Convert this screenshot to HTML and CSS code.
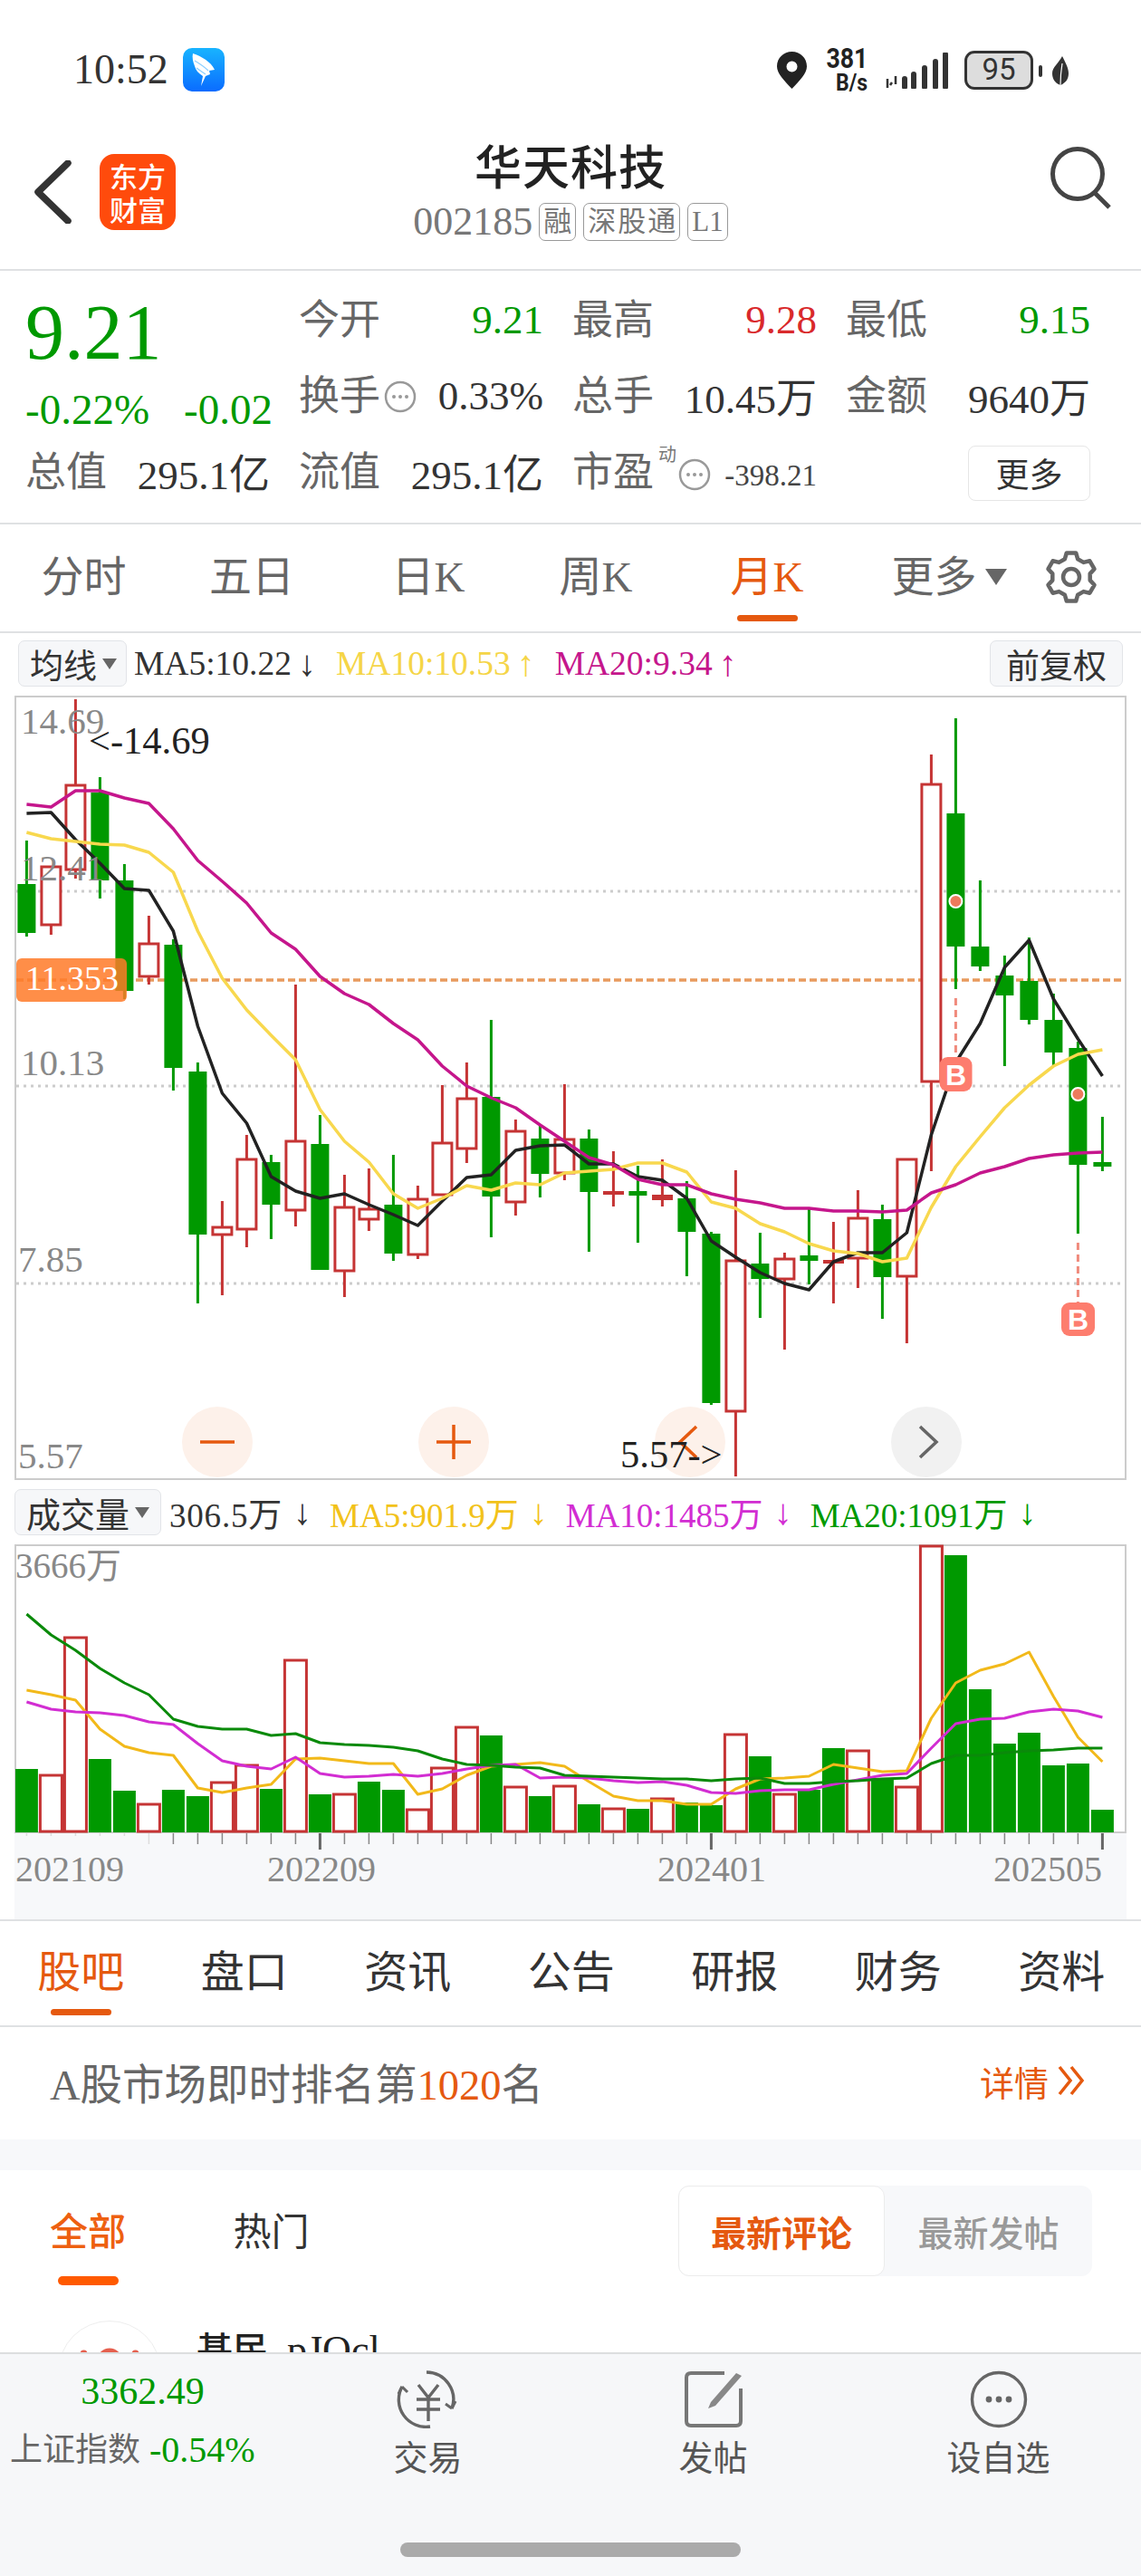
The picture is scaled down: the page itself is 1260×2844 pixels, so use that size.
FILE: index.html
```html
<!DOCTYPE html>
<html lang="zh">
<head>
<meta charset="utf-8">
<title>华天科技</title>
<link rel="stylesheet" href="styles.css">
</head>
<body>
<div class="page">
  <header class="status">
    <span class="clock">10:52</span>
    <svg class="app-icon" viewBox="0 0 46 48"><defs><linearGradient id="blue" x1="0" y1="0" x2="0" y2="1"><stop offset="0" stop-color="#18b4ff"/><stop offset="1" stop-color="#0a6cff"/></linearGradient></defs><rect width="46" height="48" rx="10" fill="url(#blue)"/><path d="M11 6C20 9 31 15 35 24L29 25L30 29L25 31L20 42L22 31C17 28 14 24 13 20C11 15 10 10 11 6Z" fill="#fff"/><path d="M13 14C18 17 23 20 28 25M15 22C19 25 22 27 25 29" stroke="#8ccfff" stroke-width="1.3" fill="none"/></svg>
    <div class="sys">
      <svg class="pin" viewBox="0 0 33 41"><path fill-rule="evenodd" d="M16.5 0C7.4 0 0 7.2 0 16.2C0 24 8 32 16.5 41C25 32 33 24 33 16.2C33 7.2 25.6 0 16.5 0ZM16.5 10.5a6 6 0 1 1 0 12a6 6 0 0 1 0-12Z" fill="#222"/></svg>
      <div class="speed"><b>381</b><b class="speed-unit">B/s</b></div>
      <svg class="signal" viewBox="0 0 72 40"><path d="M3 29v10M8 33l-2 3M12 26v9" stroke="#333" stroke-width="2.5" fill="none"/><path d="M22 29v9M32 24v14M44 17v21M56 10v28M67 2v36" stroke="#333" stroke-width="6" stroke-linecap="round" fill="none"/></svg>
      <div class="battery"><span>95</span><i class="battery-nub"></i></div>
      <svg class="leaf" viewBox="0 0 18 32"><path d="M11 0C15 8 18 13 18 19C18 26 14 30 9 32C3 30 0 25 0 19C0 12 7 8 11 0Z" fill="#333"/><path d="M9 32C9 24 10 14 11 8" stroke="#fff" stroke-width="1.2" fill="none"/></svg>
    </div>
  </header>

  <nav class="navbar">
    <div class="nav-left">
      <svg class="back" viewBox="0 0 42 70"><path d="M38 3L5 35L38 67" fill="none" stroke="#333" stroke-width="7.5" stroke-linecap="round" stroke-linejoin="round"/></svg>
      <div class="logo"><span>东方</span><span>财富</span></div>
    </div>
    <div class="nav-title">
      <h1>华天科技</h1>
      <div class="code-row"><span class="code">002185</span><span class="tag">融</span><span class="tag tag-wide">深股通</span><span class="tag">L1</span></div>
    </div>
    <div class="nav-right">
      <svg class="search" viewBox="0 0 70 70"><circle cx="30" cy="30" r="27.5" fill="none" stroke="#444" stroke-width="5"/><path d="M48 50L65 67" stroke="#444" stroke-width="5" fill="none"/></svg>
    </div>
  </nav>

  <section class="quote">
    <div class="price-block">
      <div class="price">9.21</div>
      <div class="change"><span>-0.22%</span><span>-0.02</span></div>
    </div>
    <div class="cell"><span class="lbl">今开</span><span class="val green">9.21</span></div>
    <div class="cell"><span class="lbl">最高</span><span class="val red">9.28</span></div>
    <div class="cell"><span class="lbl">最低</span><span class="val green">9.15</span></div>
    <div class="cell"><span class="lbl">换手</span><svg class="more-dot" viewBox="0 0 36 36"><circle cx="18" cy="18" r="16" fill="none" stroke="#999" stroke-width="2.5"/><circle cx="11" cy="18" r="2" fill="#999"/><circle cx="18" cy="18" r="2" fill="#999"/><circle cx="25" cy="18" r="2" fill="#999"/></svg><span class="val">0.33%</span></div>
    <div class="cell"><span class="lbl">总手</span><span class="val">10.45万</span></div>
    <div class="cell"><span class="lbl">金额</span><span class="val">9640万</span></div>
    <div class="cell"><span class="lbl">总值</span><span class="val">295.1亿</span></div>
    <div class="cell"><span class="lbl">流值</span><span class="val">295.1亿</span></div>
    <div class="cell"><span class="lbl">市盈</span><sup class="dyn">动</sup><svg class="more-dot" viewBox="0 0 36 36"><circle cx="18" cy="18" r="16" fill="none" stroke="#999" stroke-width="2.5"/><circle cx="11" cy="18" r="2" fill="#999"/><circle cx="18" cy="18" r="2" fill="#999"/><circle cx="25" cy="18" r="2" fill="#999"/></svg><span class="val small">-398.21</span></div>
    <div class="cell cell-end"><button class="more-btn">更多</button></div>
  </section>

  <nav class="period">
    <div class="tab"><span class="tab-label">分时</span></div>
    <div class="tab"><span class="tab-label">五日</span></div>
    <div class="tab"><span class="tab-label">日K</span></div>
    <div class="tab"><span class="tab-label">周K</span></div>
    <div class="tab on"><span class="tab-label">月K</span><i class="tab-bar"></i></div>
    <div class="tab"><span class="tab-label">更多<em class="tri"></em></span></div>
    <svg class="gear" viewBox="-30 -30 60 60"><path d="M-7.2-19.7L-5.2-26.5L5.2-26.5L7.2-19.7L13.5-16.1L20.4-17.7L25.5-8.8L20.7-3.6L20.7 3.6L25.5 8.8L20.4 17.7L13.5 16.1L7.2 19.7L5.2 26.5L-5.2 26.5L-7.2 19.7L-13.5 16.1L-20.4 17.7L-25.5 8.8L-20.7 3.6L-20.7-3.6L-25.5-8.8L-20.4-17.7L-13.5-16.1Z" fill="none" stroke="#666" stroke-width="4.5" stroke-linejoin="round"/><circle r="9" fill="none" stroke="#666" stroke-width="4.5"/></svg>
  </nav>

  <div class="ma-row">
    <div class="chip">均线<em class="tri small-tri"></em></div>
    <span class="ma c-dark">MA5:10.22</span><span class="arrow c-dark">↓</span>
    <span class="ma c-yellow">MA10:10.53</span><span class="arrow c-yellow">↑</span>
    <span class="ma c-magenta">MA20:9.34</span><span class="arrow c-magenta">↑</span>
    <div class="chip chip-end">前复权</div>
  </div>

  <svg class="chart-main" viewBox="0 764 1260 876">
    <rect class="frame" x="17" y="769" width="1226" height="864"/>
    <path class="dots" d="M18 984H1242M18 1199H1242M18 1417H1242"/>
    <path class="dash" d="M18 1082H1242"/>
    <path class="wick wick-g" d="M29.4 928V1034M110.4 858V992M137.4 954V1103M191.4 1037V1204M218.4 1173V1439M299.4 1275V1368M353.4 1231V1402M434.4 1275V1392M542.4 1126V1366M596.4 1242V1322M650.4 1247V1382M704.4 1287V1372M758.4 1304V1409M785.4 1360V1551M839.4 1361V1455M893.4 1335V1418M974.4 1330V1456M1055.4 793V1092M1082.4 972V1072M1109.4 1055V1177M1136.4 1035V1131M1163.4 1097V1178M1190.4 1150V1362M1217.4 1233V1293"/>
    <path class="wick wick-r" d="M56.4 1021V1032M83.4 772V867M83.4 960V970M164.4 1011V1042M164.4 1078V1087M245.4 1326V1355M245.4 1363V1430M272.4 1253V1280M272.4 1357V1377M326.4 1087V1260M326.4 1336V1354M380.4 1297V1333M380.4 1403V1432M407.4 1290V1335M407.4 1346V1359M461.4 1309V1324M461.4 1385V1390M488.4 1198V1262M515.4 1173V1213M515.4 1268V1284M569.4 1236V1249M569.4 1327V1342M623.4 1197V1258M623.4 1295V1303M677.4 1271V1332M731.4 1280V1332M812.4 1292V1392M812.4 1558V1630M866.4 1383V1390M866.4 1412V1490M920.4 1349V1439M947.4 1314V1345M947.4 1389V1422M1001.4 1409V1483M1028.4 833V866M1028.4 1194V1293"/>
    <path class="body-g" d="M19.4 976h20v54h-20zM100.4 875h20v97h-20zM127.4 972h20v122h-20zM181.4 1043h20v136h-20zM208.4 1183h20v180h-20zM289.4 1283h20v47h-20zM343.4 1263h20v139h-20zM424.4 1330h20v54h-20zM532.4 1211h20v110h-20zM586.4 1257h20v39h-20zM640.4 1257h20v59h-20zM748.4 1323h20v37h-20zM775.4 1362h20v187h-20zM829.4 1395h20v17h-20zM964.4 1346h20v64h-20zM1045.4 898h20v147h-20zM1072.4 1045h20v22h-20zM1099.4 1077h20v22h-20zM1126.4 1083h20v43h-20zM1153.4 1126h20v36h-20zM1180.4 1157h20v129h-20zM694.4 1315h20v5h-20zM883.4 1386h20v6h-20zM1207.4 1283h20v5h-20z"/>
    <path class="body-r" d="M45.9 957h21v64h-21zM72.9 867h21v93h-21zM153.9 1042h21v36h-21zM234.9 1355h21v8h-21zM261.9 1280h21v77h-21zM315.9 1260h21v76h-21zM369.9 1333h21v70h-21zM396.9 1335h21v11h-21zM450.9 1324h21v61h-21zM477.9 1262h21v57h-21zM504.9 1213h21v55h-21zM558.9 1249h21v78h-21zM612.9 1258h21v37h-21zM801.9 1392h21v166h-21zM855.9 1390h21v22h-21zM936.9 1345h21v44h-21zM990.9 1280h21v129h-21zM1017.9 866h21v328h-21z"/>
    <path class="doji-r" d="M666 1315h23v4h-23zM720 1319h23v6h-23zM909 1391h23v4h-23z"/>
    <polyline class="ma-line l-black" points="29.4,898 56.4,897 83.4,927 110.4,953 137.4,981 164.4,983 191.4,1028 218.4,1133 245.4,1207 272.4,1240 299.4,1299 326.4,1315 353.4,1323 380.4,1318 407.4,1330 434.4,1341 461.4,1353 488.4,1326 515.4,1300 542.4,1297 569.4,1270 596.4,1265 623.4,1264 650.4,1285 677.4,1285 704.4,1299 731.4,1303 758.4,1323 785.4,1370 812.4,1388 839.4,1405 866.4,1417 893.4,1424 920.4,1393 947.4,1383 974.4,1383 1001.4,1361 1028.4,1253 1055.4,1173 1082.4,1130 1109.4,1068 1136.4,1038 1163.4,1103 1190.4,1147 1217.4,1188"/>
    <polyline class="ma-line l-yellow" points="29.4,919 56.4,926 83.4,929 110.4,932 137.4,933 164.4,941 191.4,963 218.4,1028 245.4,1080 272.4,1115 299.4,1143 326.4,1170 353.4,1225 380.4,1260 407.4,1283 434.4,1318 461.4,1334 488.4,1323 515.4,1309 542.4,1314 569.4,1306 596.4,1308 623.4,1295 650.4,1293 677.4,1291 704.4,1284 731.4,1284 758.4,1294 785.4,1327 812.4,1334 839.4,1351 866.4,1360 893.4,1373 920.4,1381 947.4,1384 974.4,1393 1001.4,1389 1028.4,1333 1055.4,1288 1082.4,1255 1109.4,1223 1136.4,1198 1163.4,1177 1190.4,1164 1217.4,1159"/>
    <polyline class="ma-line l-magenta" points="29.4,888 56.4,891 83.4,873 110.4,873 137.4,881 164.4,887 191.4,915 218.4,950 245.4,973 272.4,997 299.4,1030 326.4,1048 353.4,1078 380.4,1097 407.4,1109 434.4,1130 461.4,1148 488.4,1177 515.4,1199 542.4,1212 569.4,1223 596.4,1242 623.4,1260 650.4,1278 677.4,1286 704.4,1302 731.4,1308 758.4,1308 785.4,1318 812.4,1324 839.4,1328 866.4,1334 893.4,1334 920.4,1337 947.4,1337 974.4,1338 1001.4,1336 1028.4,1317 1055.4,1308 1082.4,1295 1109.4,1288 1136.4,1279 1163.4,1275 1190.4,1273 1217.4,1272"/>
    <text class="axis" x="23" y="810">14.69</text>
    <text class="axis" x="23" y="972">12.41</text>
    <text class="axis" x="23" y="1187">10.13</text>
    <text class="axis" x="20" y="1404">7.85</text>
    <text class="axis" x="20" y="1621">5.57</text>
    <rect class="price-flag" x="18" y="1058" width="122" height="48" rx="6"/>
    <text class="flag-text" x="28" y="1093">11.353</text>
    <text class="peak" x="98" y="832">&lt;-14.69</text>
    <path class="mark-dash" d="M1055.4 1102V1167M1190.4 1372V1438"/>
    <circle class="mark-dot" cx="1055.4" cy="995" r="7"/>
    <circle class="mark-dot" cx="1190.4" cy="1208" r="7"/>
    <rect class="mark" x="1037.5" y="1167" width="36" height="38" rx="9"/>
    <text class="mark-b" x="1055.5" y="1198">B</text>
    <rect class="mark" x="1172" y="1438" width="37" height="37" rx="9"/>
    <text class="mark-b" x="1190.5" y="1468">B</text>
    <circle class="btn-o" cx="240" cy="1592" r="39"/>
    <path class="btn-s" d="M221 1592H259"/>
    <circle class="btn-o" cx="501" cy="1592" r="39"/>
    <path class="btn-s" d="M482 1592H520M501 1573V1611"/>
    <circle class="btn-o" cx="762" cy="1592" r="39"/>
    <path class="btn-s" d="M769 1575L751 1592L769 1609"/>
    <circle class="btn-n" cx="1023" cy="1592" r="39"/>
    <path class="btn-g" d="M1016 1575L1034 1592L1016 1609"/>
    <text class="peak" x="685" y="1620">5.57-&gt;</text>
  </svg>

  <div class="vol-row">
    <div class="chip chip-vol">成交量<em class="tri small-tri"></em></div>
    <span class="vm vm-first c-dark">306.5万</span><span class="varrow c-dark">↓</span>
    <span class="vm c-gold">MA5:901.9万</span><span class="varrow c-gold">↓</span>
    <span class="vm c-purple">MA10:1485万</span><span class="varrow c-purple">↓</span>
    <span class="vm c-green">MA20:1091万</span><span class="varrow c-green">↓</span>
  </div>

  <svg class="chart-vol" viewBox="0 1700 1260 419">
    <rect class="axis-bg" x="16" y="2023" width="1228" height="96"/>
    <rect class="frame" x="17" y="1706" width="1226" height="317"/>
    <path class="tick tick-faint" d="M29.4 2024v3M56.4 2024v3M83.4 2024v3M110.4 2024v3M137.4 2024v3M164.4 2024v12"/>
    <path class="tick" d="M191.4 2024v12M218.4 2024v12M245.4 2024v12M272.4 2024v12M299.4 2024v12M326.4 2024v12M380.4 2024v12M407.4 2024v12M434.4 2024v12M461.4 2024v12M488.4 2024v12M515.4 2024v12M542.4 2024v12M569.4 2024v12M596.4 2024v12M623.4 2024v12M650.4 2024v12M677.4 2024v12M704.4 2024v12M731.4 2024v12M758.4 2024v12M812.4 2024v12M839.4 2024v12M866.4 2024v12M893.4 2024v12M920.4 2024v12M947.4 2024v12M974.4 2024v12M1001.4 2024v12M1028.4 2024v12M1055.4 2024v12M1082.4 2024v12M1109.4 2024v12M1136.4 2024v12M1163.4 2024v12M1190.4 2024v12"/>
    <path class="tick tick-major" d="M353.4 2024v18M785.4 2024v18M1217.4 2024v18"/>
    <path class="body-g" d="M17 1953h24.9V2023h-24.9zM97.9 1942h25V2023h-25zM124.9 1977h25V2023h-25zM178.9 1976h25V2023h-25zM205.9 1983h25V2023h-25zM286.9 1975h25V2023h-25zM340.9 1981h25V2023h-25zM394.9 1967h25V2023h-25zM421.9 1976h25V2023h-25zM529.9 1916h25V2023h-25zM583.9 1983h25V2023h-25zM637.9 1992h25V2023h-25zM691.9 1997h25V2023h-25zM745.9 1990h25V2023h-25zM772.9 1993h25V2023h-25zM826.9 1939h25V2023h-25zM880.9 1976h25V2023h-25zM907.9 1930h25V2023h-25zM961.9 1963h25V2023h-25zM1042.9 1717h25V2023h-25zM1069.9 1865h25V2023h-25zM1096.9 1925h25V2023h-25zM1123.9 1913h25V2023h-25zM1150.9 1949h25V2023h-25zM1177.9 1947h25V2023h-25zM1204.9 1998h25V2023h-25z"/>
    <path class="bar-r" d="M44.4 1960h24V2022h-24zM71.4 1808h24V2022h-24zM152.4 1992h24V2022h-24zM233.4 1968h24V2022h-24zM260.4 1949h24V2022h-24zM314.4 1833h24V2022h-24zM368.4 1981h24V2022h-24zM449.4 1998h24V2022h-24zM476.4 1952h24V2022h-24zM503.4 1907h24V2022h-24zM557.4 1973h24V2022h-24zM611.4 1972h24V2022h-24zM665.4 1997h24V2022h-24zM719.4 1986h24V2022h-24zM800.4 1915h24V2022h-24zM854.4 1981h24V2022h-24zM935.4 1933h24V2022h-24zM989.4 1973h24V2022h-24zM1016.4 1707h24V2022h-24z"/>
    <polyline class="vol-line l-gold" points="29.4,1866 56.4,1871 83.4,1877 110.4,1909 137.4,1928 164.4,1935 191.4,1938 218.4,1974 245.4,1979 272.4,1974 299.4,1970 326.4,1942 353.4,1941 380.4,1944 407.4,1947 434.4,1947 461.4,1981 488.4,1975 515.4,1960 542.4,1950 569.4,1948 596.4,1946 623.4,1950 650.4,1967 677.4,1983 704.4,1988 731.4,1988 758.4,1992 785.4,1992 812.4,1975 839.4,1964 866.4,1963 893.4,1961 920.4,1948 947.4,1952 974.4,1956 1001.4,1955 1028.4,1897 1055.4,1858 1082.4,1844 1109.4,1837 1136.4,1824 1163.4,1873 1190.4,1918 1217.4,1945"/>
    <polyline class="vol-line l-purple" points="29.4,1879 56.4,1887 83.4,1890 110.4,1891 137.4,1894 164.4,1901 191.4,1904 218.4,1925 245.4,1944 272.4,1950 299.4,1953 326.4,1940 353.4,1958 380.4,1962 407.4,1961 434.4,1959 461.4,1961 488.4,1958 515.4,1953 542.4,1949 569.4,1948 596.4,1963 623.4,1962 650.4,1963 677.4,1966 704.4,1968 731.4,1967 758.4,1971 785.4,1979 812.4,1980 839.4,1977 866.4,1976 893.4,1976 920.4,1970 947.4,1965 974.4,1960 1001.4,1958 1028.4,1930 1055.4,1903 1082.4,1898 1109.4,1897 1136.4,1890 1163.4,1887 1190.4,1889 1217.4,1896"/>
    <polyline class="vol-line l-dgreen" points="29.4,1782 56.4,1805 83.4,1822 110.4,1842 137.4,1858 164.4,1871 191.4,1898 218.4,1906 245.4,1909 272.4,1909 299.4,1916 326.4,1914 353.4,1924 380.4,1926 407.4,1927 434.4,1929 461.4,1933 488.4,1942 515.4,1948 542.4,1949 569.4,1951 596.4,1952 623.4,1960 650.4,1961 677.4,1962 704.4,1963 731.4,1964 758.4,1964 785.4,1966 812.4,1964 839.4,1963 866.4,1969 893.4,1969 920.4,1967 947.4,1966 974.4,1964 1001.4,1963 1028.4,1947 1055.4,1938 1082.4,1938 1109.4,1935 1136.4,1933 1163.4,1932 1190.4,1930 1217.4,1930"/>
    <text class="axis axis-v" x="17" y="1742">3666万</text>
    <text class="axis axis-date" x="17" y="2077">202109</text>
    <text class="axis axis-date" x="295" y="2077">202209</text>
    <text class="axis axis-date" x="726" y="2077">202401</text>
    <text class="axis axis-date" x="1097" y="2077">202505</text>
  </svg>

  <nav class="sections">
    <div class="sec on"><span class="sec-label">股吧</span><i class="sec-bar"></i></div>
    <div class="sec"><span class="sec-label">盘口</span></div>
    <div class="sec"><span class="sec-label">资讯</span></div>
    <div class="sec"><span class="sec-label">公告</span></div>
    <div class="sec"><span class="sec-label">研报</span></div>
    <div class="sec"><span class="sec-label">财务</span></div>
    <div class="sec"><span class="sec-label">资料</span></div>
  </nav>

  <div class="rank">
    <span class="rank-text">A股市场即时排名第<b>1020</b>名</span>
    <span class="rank-link">详情<svg class="dchev" viewBox="0 0 32 34"><path d="M3 2L15 17L3 32M16 2L28 17L16 32" fill="none" stroke="#e5590f" stroke-width="3.5"/></svg></span>
  </div>

  <div class="band"></div>

  <section class="feed">
    <div class="feed-head">
      <div class="feed-tab on"><span>全部</span><i></i></div>
      <div class="feed-tab"><span>热门</span></div>
      <div class="seg">
        <span class="seg-item on">最新评论</span>
        <span class="seg-item">最新发帖</span>
      </div>
    </div>
    <div class="post">
      <div class="avatar"><svg class="avatar-art" viewBox="0 0 114 114"><circle cx="57" cy="44" r="14" fill="#e5604f"/><circle cx="28" cy="36" r="4" fill="#e5604f"/><circle cx="86" cy="36" r="4" fill="#e5604f"/></svg></div>
      <span class="post-name">基民<em>pJQcl</em></span>
    </div>
  </section>

  <footer class="bottom">
    <div class="bottom-grid">
      <div class="index">
        <span class="index-val">3362.49</span>
        <span class="index-row">上证指数<b>-0.54%</b></span>
      </div>
      <div class="act">
        <svg class="act-icon" viewBox="0 0 72 64"><path d="M34 2A30 30 0 0 1 62 42M38 62A30 30 0 0 1 7 18" fill="none" stroke="#666" stroke-width="3.4"/><path d="M62 42L66 34M62 42L55 37M7 18L3 26M7 18L13 24" fill="none" stroke="#666" stroke-width="3"/><path d="M25 16L36 30L47 16M23 32H49M23 43H49M36 30V56" fill="none" stroke="#666" stroke-width="3.4"/></svg>
        <span>交易</span>
      </div>
      <div class="act">
        <svg class="act-icon" viewBox="0 0 72 64"><path d="M48 3H11Q6 3 6 8V56Q6 61 11 61H61Q66 61 66 56V20" fill="none" stroke="#777" stroke-width="4"/><path d="M61 3L67 6L38 39L30 42L33 35Z" fill="#888"/></svg>
        <span>发帖</span>
      </div>
      <div class="act">
        <svg class="act-icon" viewBox="0 0 72 64"><circle cx="36" cy="32" r="29.5" fill="none" stroke="#666" stroke-width="3.4"/><circle cx="25" cy="32" r="3.4" fill="#666"/><circle cx="36" cy="32" r="3.4" fill="#666"/><circle cx="47" cy="32" r="3.4" fill="#666"/></svg>
        <span>设自选</span>
      </div>
    </div>
    <div class="home-bar"></div>
  </footer>
</div>
</body>
</html>
```
FILE: styles.css
```css
* { box-sizing: border-box; }
html, body { margin: 0; padding: 0; background: #fff; }
body { font-family: "Liberation Serif", "Noto Sans CJK SC", serif; color: #333; }
em, i { font-style: normal; }
.page { position: relative; width: 1260px; height: 2844px; overflow: hidden; background: #fff; }

/* status bar */
.status { display: flex; height: 150px; padding: 53px 80px 0 81px; align-items: flex-start; }
.clock { font-size: 46px; line-height: 48px; color: #333; }
.app-icon { width: 46px; height: 48px; margin-left: 16px; }
.sys { display: flex; margin-left: auto; align-items: flex-start; }
.pin { width: 33px; height: 41px; margin-top: 4px; }
.speed { display: flex; flex-direction: column; align-items: flex-end; width: 46px; margin-left: 21px; font-family: Roboto, sans-serif; color: #222; }
.speed b { font-size: 31px; line-height: 23px; transform: scaleX(.86); transform-origin: right center; }
.speed .speed-unit { font-size: 25px; line-height: 20px; margin-top: 6px; transform: scaleX(.92); }
.signal { width: 72px; height: 40px; margin: 5px 0 0 19px; }
.battery { position: relative; width: 76px; height: 43px; margin: 3px 0 0 16px; border: 3.5px solid #333; border-radius: 11px; background: #ddd; text-align: center; font-family: Roboto, sans-serif; font-size: 33px; line-height: 36px; color: #333; }
.battery-nub { position: absolute; right: -13px; top: 13px; width: 4px; height: 13px; border-radius: 2px; background: #333; }
.leaf { width: 18px; height: 32px; margin: 9px 0 0 21px; }

/* nav bar */
.navbar { display: grid; grid-template-columns: 1fr auto 1fr; height: 149px; border-bottom: 2px solid #dfe1e3; }
.nav-left { display: flex; align-items: center; height: 84px; margin-top: 20px; padding-left: 37px; }
.back { width: 42px; height: 70px; }
.logo { display: flex; flex-direction: column; align-items: center; justify-content: center; width: 84px; height: 84px; margin-left: 31px; border-radius: 16px; background: #ff4b0c; color: #fff; font-family: "Noto Sans CJK SC", sans-serif; font-size: 31px; line-height: 37px; font-weight: 500; }
.nav-title { display: flex; flex-direction: column; align-items: center; padding-top: 9px; }
.nav-title h1 { margin: 0; font-size: 52px; line-height: 56px; font-weight: 500; color: #222; letter-spacing: 1px; }
.code-row { display: flex; align-items: center; margin-top: 9px; gap: 8px; }
.code { font-size: 44px; line-height: 42px; color: #777; margin-right: -1px; }
.tag { height: 42px; padding: 0 4px; border: 1.5px solid #999; border-radius: 7px; font-size: 31px; line-height: 39px; color: #777; }
.tag-wide { letter-spacing: 2px; padding-right: 2px; }
.nav-right { display: flex; justify-content: flex-end; padding: 12px 30px 0 0; }
.search { width: 70px; height: 70px; }

/* quote */
.quote { display: grid; grid-template-columns: repeat(4, 270px); grid-auto-rows: 84px; column-gap: 32px; height: 280px; padding: 13px 0 0 28px; border-bottom: 2px solid #dfe1e3; }
.price-block { grid-row: span 2; display: flex; flex-direction: column; }
.price { margin-top: 10px; font-size: 86px; line-height: 90px; color: #090; }
.change { display: flex; justify-content: space-between; margin-top: 15px; width: 273px; font-size: 47px; line-height: 50px; color: #090; }
.cell { display: flex; align-items: center; }
.cell-end { justify-content: flex-end; }
.lbl { font-size: 45px; color: #666; line-height: 84px; }
.val { margin-left: auto; margin-bottom: 3px; font-size: 45px; color: #333; white-space: nowrap; }
.val.small { font-size: 33px; margin-top: 6px; margin-bottom: 0; color: #444; }
.green { color: #090; }
.red { color: #d9292b; }
.more-dot { width: 36px; height: 36px; margin-left: 4px; }
.dyn { font-size: 20px; color: #777; line-height: 20px; align-self: flex-start; margin: 12px 0 0 5px; }
.cell .dyn + .more-dot { margin-left: 2px; margin-top: 4px; }
.more-btn { width: 135px; height: 61px; border: 1.5px solid #e6e6e6; border-radius: 8px; background: #fff; font: inherit; font-size: 37px; color: #333; padding: 0; }

/* period tabs */
.period { display: grid; grid-template-columns: 185px 186px 204px 166px 212px 190px 1fr; height: 120px; border-bottom: 2px solid #dfe1e3; align-items: start; }
.tab { display: flex; flex-direction: column; align-items: center; padding-top: 34px; }
.tab-label { display: flex; align-items: center; font-size: 47px; line-height: 48px; color: #666; }
.tab.on .tab-label { color: #e5590f; }
.tab-bar { width: 67px; height: 7px; margin-top: 18px; border-radius: 4px; background: #e5590f; }
.tri { display: inline-block; width: 0; height: 0; margin-left: 9px; border-left: 12px solid transparent; border-right: 12px solid transparent; border-top: 18px solid #666; }
.small-tri { margin-left: 6px; border-left-width: 8px; border-right-width: 8px; border-top-width: 12px; }
.gear { width: 60px; height: 60px; margin: 28px 0 0 10px; }

/* MA row */
.ma-row { display: flex; align-items: center; height: 65px; padding: 8px 20px 6px 20px; }
.chip { display: flex; align-items: center; height: 51px; padding: 0 10px 0 12px; border: 1.5px solid #e2e4e8; border-radius: 7px; background: #f6f7f9; font-size: 37px; color: #333; white-space: nowrap; }
.chip-end { margin-left: auto; padding: 0; width: 147px; justify-content: center; }
.ma { font-size: 37.5px; margin-left: 8px; white-space: nowrap; }
.arrow { font-size: 40px; margin-left: 7px; margin-right: 14px; }
.c-dark { color: #333; }
.c-yellow { color: #f5d547; }
.c-magenta { color: #c5168c; }
.c-gold { color: #f2c21a; }
.c-purple { color: #d22dd2; }
.c-green { color: #090; }

/* chart svg */
.chart-main { display: block; width: 1260px; height: 876px; }
.chart-vol { display: block; width: 1260px; height: 419px; }
.frame { fill: #fff; stroke: #ccc; stroke-width: 2; }
.dots { stroke: #ccc; stroke-width: 3; stroke-dasharray: 3 5; fill: none; }
.dash { stroke: #e89a5e; stroke-width: 3.5; stroke-dasharray: 8 4; fill: none; }
.wick { fill: none; stroke-width: 3; }
.wick-g { stroke: #090; }
.wick-r { stroke: #c53434; }
.body-g { fill: #090; }
.body-r { fill: #fff; stroke: #c53434; stroke-width: 3; }
.doji-r { fill: #c53434; }
.ma-line { fill: none; stroke-width: 3.5; stroke-linejoin: round; }
.l-black { stroke: #222; }
.l-yellow { stroke: #f8d84e; }
.l-magenta { stroke: #c5168c; }
.axis { font-size: 41px; fill: #888; }
.axis-v { font-size: 39px; }
.axis-date { font-size: 40px; }
.peak { font-size: 42.5px; fill: #222; }
.price-flag { fill: #ff7a28; fill-opacity: .85; }
.flag-text { font-size: 38px; fill: #fff; }
.mark-dash { fill: none; stroke: #f08a7c; stroke-width: 3; stroke-dasharray: 8 5; }
.mark-dot { fill: #ed7a5c; stroke: #fff; stroke-width: 2; }
.mark { fill: #fd7d6e; }
.mark-b { font-family: "Liberation Sans", sans-serif; font-weight: 700; font-size: 32px; fill: #fff; text-anchor: middle; }
.btn-o { fill: #fdf1ea; }
.btn-n { fill: #f1f1f1; }
.btn-s { fill: none; stroke: #e5590f; stroke-width: 3.5; }
.btn-g { fill: none; stroke: #666; stroke-width: 3.5; }

/* volume */
.vol-row { display: flex; align-items: center; height: 60px; padding: 4px 0 5px 16px; }
.chip-vol { width: 162px; font-size: 38px; padding: 0 9px 0 12px; }
.vm { font-size: 37px; margin-left: 9px; white-space: nowrap; }
.vm-first { letter-spacing: .8px; }
.varrow { font-size: 40px; margin-left: 12px; margin-right: 11px; }
.axis-bg { fill: #f7f8fa; }
.bar-r { fill: #fff; stroke: #c53434; stroke-width: 3; }
.tick { fill: none; stroke: #888; stroke-width: 1.5; }
.tick-faint { stroke: #ddd; }
.tick-major { stroke: #666; stroke-width: 3; }
.vol-line { fill: none; stroke-width: 3; stroke-linejoin: round; }
.l-gold { stroke: #f2b91a; }
.l-purple { stroke: #d22dd2; }
.l-dgreen { stroke: #0a8a0a; }

/* section tabs */
.sections { display: grid; grid-template-columns: repeat(7, 180.5px); height: 119px; margin-left: -1px; border-top: 2px solid #dfe1e3; border-bottom: 2px solid #dfe1e3; width: 1262px; }
.sec { display: flex; flex-direction: column; align-items: center; padding-top: 33px; }
.sec-label { font-size: 48px; line-height: 48px; color: #333; }
.sec.on .sec-label { color: #e5590f; }
.sec-bar { width: 67px; height: 7px; margin-top: 16px; border-radius: 4px; background: #e5590f; }

/* rank */
.rank { display: flex; justify-content: space-between; align-items: center; height: 124px; padding: 0 61px 6px 55px; }
.rank-text { font-size: 46.5px; color: #666; white-space: nowrap; }
.rank-text b { font-weight: 400; color: #e5590f; }
.rank-link { display: flex; align-items: center; font-size: 38px; color: #e5590f; }
.dchev { width: 32px; height: 34px; margin-left: 9px; }
.band { height: 34px; background: #f7f8fa; }

/* feed */
.feed-head { display: flex; height: 125px; padding: 17px 54px 0 0; align-items: flex-start; }
.feed-tab { display: flex; flex-direction: column; align-items: center; width: 211px; padding-top: 28px; font-size: 42px; line-height: 48px; color: #333; }
.feed-tab:first-child { width: 194px; }
.feed-tab.on { color: #ee6010; font-weight: 500; }
.feed-tab i { width: 67px; height: 10px; margin-top: 24px; border-radius: 5px; background: #ff5a00; }
.seg { display: flex; margin-left: auto; width: 457px; height: 100px; border-radius: 12px; background: #f7f8fa; }
.seg-item { display: flex; align-items: center; justify-content: center; flex: 1; font-size: 39px; color: #999; font-weight: 500; }
.seg-item.on { flex: 0 0 228px; border: 1.5px solid #ececec; border-radius: 12px; background: #fff; color: #e5590f; font-weight: 600; }
.post { display: flex; align-items: flex-start; padding: 41px 0 0 64px; }
.avatar { width: 114px; height: 114px; border: 1.5px solid #eee; border-radius: 50%; background: #fff; }
.avatar-art { display: block; width: 100%; height: 100%; }
.post-name { margin: 10px 0 0 39px; font-size: 40px; line-height: 46px; color: #222; font-weight: 500; white-space: nowrap; }
.post-name em { margin-left: 20px; font-size: 44px; }

/* bottom bar */
.bottom { position: absolute; left: 0; bottom: 0; width: 1260px; height: 247px; border-top: 2px solid #dcdedf; background: #f6f7f9; }
.bottom-grid { display: grid; grid-template-columns: repeat(4, 315px); padding-top: 18px; }
.index { display: flex; flex-direction: column; align-items: center; }
.index-val { font-size: 42px; line-height: 44px; color: #090; margin-top: 1px; }
.index-row { display: flex; align-items: center; align-self: flex-start; margin: 21px 0 0 11px; font-size: 36px; line-height: 44px; color: #666; white-space: nowrap; }
.index-row b { margin-left: 10px; font-weight: 400; font-size: 40px; color: #090; }
.act { display: flex; flex-direction: column; align-items: center; font-size: 38px; line-height: 44px; color: #555; }
.act-icon { width: 72px; height: 64px; margin-bottom: 11px; }
.home-bar { width: 376px; height: 16px; margin: 71px auto 0; border-radius: 8px; background: #aaa; }
```
